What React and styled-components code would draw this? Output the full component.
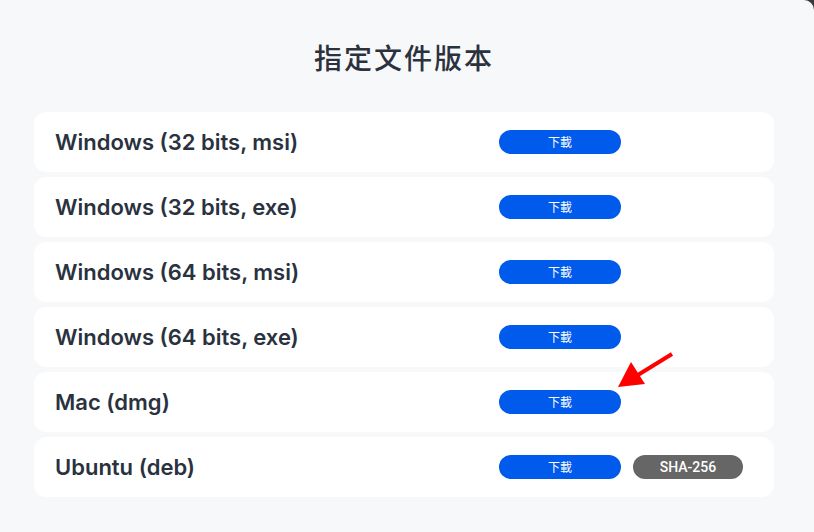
import React from "react";
import styled, { createGlobalStyle } from "styled-components";

const Global = createGlobalStyle`
  html, body { margin: 0; padding: 0; background: #3a3a3a; }
  body { font-family: Inter, "Noto Sans", sans-serif; }
`;

const Panel = styled.div`
  box-sizing: border-box;
  width: 814px;
  min-height: 532px;
  background: #f7f8fa;
  border-top-right-radius: 10px;
  padding: 36px 40px 35px 34px;
`;

const Title = styled.h1`
  margin: 0 0 34px;
  text-align: center;
  font-family: "Noto Sans CJK TC", "Noto Sans CJK SC", sans-serif;
  font-weight: 500;
  font-size: 28px;
  line-height: 42px;
  letter-spacing: 2px;
  color: #2b323d;
`;

const List = styled.div`
  display: flex;
  flex-direction: column;
  gap: 5px;
`;

const Row = styled.div`
  display: grid;
  grid-template-columns: 465px 1fr;
  align-items: center;
  height: 60px;
  background: #fff;
  border-radius: 12px;
`;

const Name = styled.div`
  padding-left: 21px;
  font-family: Inter, sans-serif;
  font-weight: 600;
  font-size: 22px;
  color: #29323e;
`;

const Actions = styled.div`
  position: relative;
  display: flex;
  align-items: center;
  gap: 12px;
`;

const Pill = styled.button`
  box-sizing: border-box;
  height: 24px;
  width: ${(p) => p.$w}px;
  border: none;
  border-radius: 12px;
  padding: 0;
  background: ${(p) => p.$bg};
  color: #fff;
  font-family: ${(p) => p.$font};
  font-size: ${(p) => p.$size}px;
  font-weight: ${(p) => p.$weight || 400};
  line-height: 24px;
  text-align: center;
  cursor: pointer;
`;

const Arrow = styled.svg`
  position: absolute;
  left: 118px;
  top: -38px;
  overflow: visible;
  pointer-events: none;
`;

const items = [
  "Windows (32 bits, msi)",
  "Windows (32 bits, exe)",
  "Windows (64 bits, msi)",
  "Windows (64 bits, exe)",
  "Mac (dmg)",
  "Ubuntu (deb)",
];

export default function App() {
  return (
    <>
      <Global />
      <Panel>
        <Title>指定文件版本</Title>
        <List>
          {items.map((name) => (
            <Row key={name}>
              <Name>{name}</Name>
              <Actions>
                <Pill $w={122} $bg="#005aeb" $size={12} $font={'"Noto Sans CJK TC", sans-serif'}>
                  下載
                </Pill>
                {name === "Ubuntu (deb)" && (
                  <Pill $w={110} $bg="#666666" $size={14} $weight={500} $font={"Roboto, sans-serif"}>
                    SHA-256
                  </Pill>
                )}
                {name === "Mac (dmg)" && (
                  <Arrow width="60" height="40" viewBox="0 0 60 40">
                    <line x1="55" y1="2" x2="16" y2="26" stroke="#ff0000" strokeWidth="4" />
                    <polygon points="1,35 14,10 28,32" fill="#ff0000" />
                  </Arrow>
                )}
              </Actions>
            </Row>
          ))}
        </List>
      </Panel>
    </>
  );
}
